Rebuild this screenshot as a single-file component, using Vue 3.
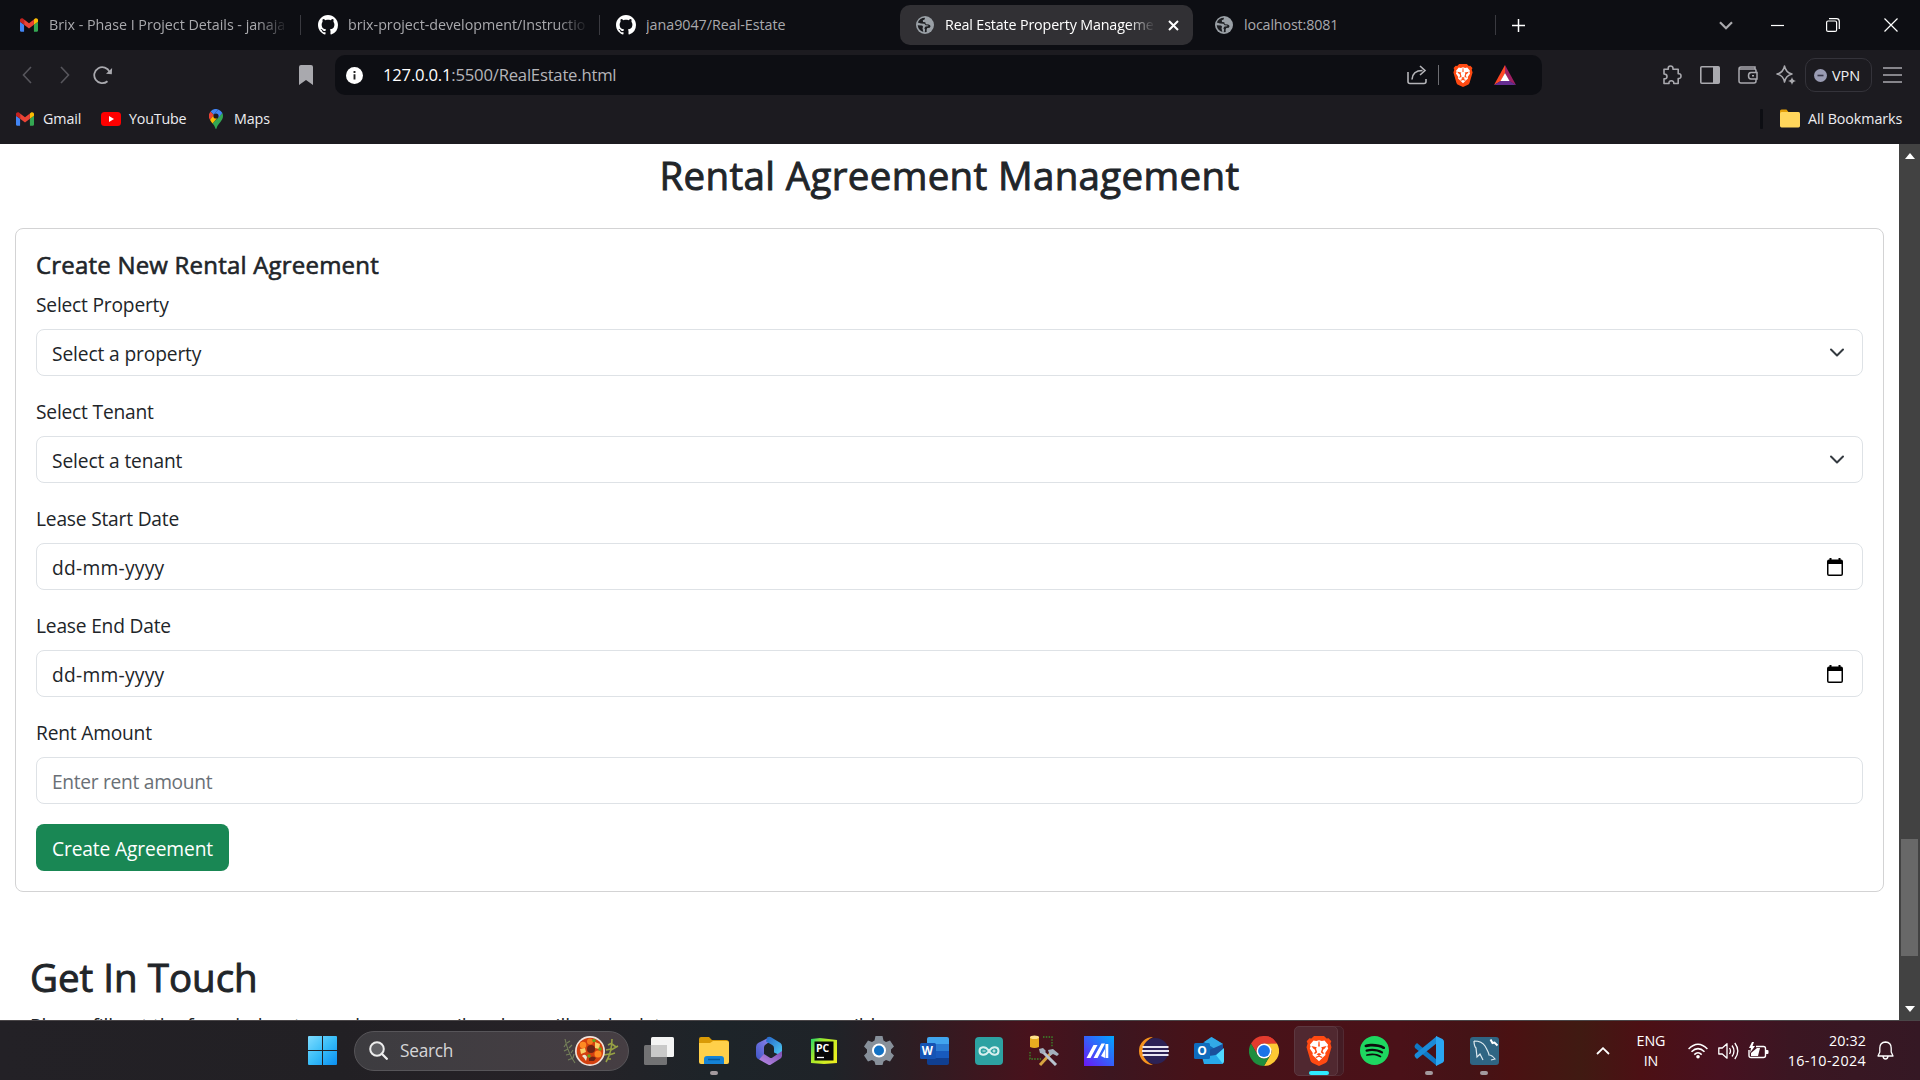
<script setup>
const tabs = [
  { icon: 'gmail', title: 'Brix - Phase I Project Details - janaja', kind: 't1', fade: true },
  { icon: 'github', title: 'brix-project-development/Instructio', kind: 't2', fade: true },
  { icon: 'github', title: 'jana9047/Real-Estate', kind: 't3' },
  { icon: 'globe', title: 'Real Estate Property Manageme', kind: 't4', fade: true, active: true },
  { icon: 'globe', title: 'localhost:8081', kind: 't5' }
]

const fields = [
  { label: 'Select Property', text: 'Select a property', type: 'select' },
  { label: 'Select Tenant', text: 'Select a tenant', type: 'select' },
  { label: 'Lease Start Date', text: 'dd-mm-yyyy', type: 'date' },
  { label: 'Lease End Date', text: 'dd-mm-yyyy', type: 'date' },
  { label: 'Rent Amount', text: 'Enter rent amount', type: 'text' }
]
</script>

<template>
  <div class="screen">
    <svg class="defs" width="0" height="0" aria-hidden="true">
      <symbol id="gmail" viewBox="52 42 88 66">
        <path fill="#4285f4" d="M58 108h14V74L52 59v43c0 3.32 2.69 6 6 6" />
        <path fill="#34a853" d="M120 108h14c3.32 0 6-2.69 6-6V59l-20 15" />
        <path fill="#fbbc04" d="M120 48v26l20-15v-8c0-7.42-8.47-11.65-14.4-7.2" />
        <path fill="#ea4335" d="M72 74V48l24 18 24-18v26L96 92" />
        <path fill="#c5221f" d="M52 51v8l20 15V48l-5.6-4.2c-5.94-4.45-14.4-.22-14.4 7.2" />
      </symbol>
      <symbol id="github" viewBox="0 0 16 16">
        <path fill="#fff" d="M8 0C3.58 0 0 3.58 0 8c0 3.54 2.29 6.53 5.47 7.59.4.07.55-.17.55-.38 0-.19-.01-.82-.01-1.49-2.01.37-2.53-.49-2.69-.94-.09-.23-.48-.94-.82-1.13-.28-.15-.68-.52-.01-.53.63-.01 1.08.58 1.23.82.72 1.21 1.87.87 2.33.66.07-.52.28-.87.51-1.07-1.78-.2-3.64-.89-3.64-3.95 0-.87.31-1.59.82-2.15-.08-.2-.36-1.02.08-2.12 0 0 .67-.21 2.2.82.64-.18 1.32-.27 2-.27s1.36.09 2 .27c1.53-1.04 2.2-.82 2.2-.82.44 1.1.16 1.92.08 2.12.51.56.82 1.27.82 2.15 0 3.07-1.87 3.75-3.65 3.95.29.25.54.73.54 1.48 0 1.07-.01 1.93-.01 2.2 0 .21.15.46.55.38A8.01 8.01 0 0 0 16 8c0-4.42-3.58-8-8-8z" />
      </symbol>
      <symbol id="globe" viewBox="0 0 18 18">
        <circle cx="9" cy="9" r="9" fill="#9aa0a6" />
        <path fill="#1d1e22" d="M1.800 6.500C3 3.300 5.500 1.800 9 1.700L8.600 3.600 6.800 4.200 7 6l2.300.3.5 1.900 2.900.2q1.900.4 1.800 2.200l-.8 1.200-2.400.2-.7 1.700.1 2.400-2 .2.400-2.800-.8-1.200 1.200-1.800 2.700-.3.100-.7-2.700-.3L8.400 7.800 5 7.500z" />
        <path fill="#1d1e22" d="M1.700 9.200l4.400.3 1 1.300-.6 1.500.9 3.700Q2.300 14.500 1.700 9.200z" />
      </symbol>
      <symbol id="brave" viewBox="0 0 26 30">
        <path fill="#ff4a12" d="M8 0h10l2.600 2.500 2-.2 2.700 3-.9 2.300 1.100 3.600-4 13.500c-.4 1.200-1.100 1.700-2 2.300L13 30l-6.500-3c-.9-.6-1.600-1.100-2-2.300L.5 11.200l1.100-3.600-.9-2.300 2.700-3 2 .2z" />
        <path fill="#fff" d="M13 4.200l2.800.9 2.700-.6 3.600 4.300-.7 1.700.8 2-3 4.600.3 1.900-1.400 1.300-5.100 4.900-5.100-4.900-1.400-1.300.3-1.900-3-4.600.8-2-.7-1.700 3.600-4.300 2.700.6z" />
        <path fill="#ff4a12" d="M5.400 10l5.400 1.200-.8 1.500 1.200 3.500-1.700 1.500-1.800-.2 1.700-2-.7-2.100-1.500-.9zM20.600 10l-5.400 1.200.8 1.500-1.200 3.500 1.700 1.500 1.800-.2-1.700-2 .7-2.100 1.500-.9zM12.500 5.500h1l.3 4.500-.8.900-.8-.9zM10.500 18.200L13 17l2.500 1.200-2.500 1.600zM9.300 21l3.700-1.600 3.700 1.600-1 .9-2.700-1.100-2.700 1.100z" />
      </symbol>
      <symbol id="folder" viewBox="0 0 20 19">
        <path fill="#e3a008" d="M0 2Q0 .5 1.500.5h5L8.500 3H18v6H0z" />
        <path fill="#ffd65c" d="M0 4.500Q0 3 1.500 3h17Q20 3 20 4.500v12.300Q20 18.500 18.500 18.500h-17Q0 18.500 0 16.800z" />
      </symbol>
    </svg>

    <header class="tabstrip">
      <template v-for="(tab, i) in tabs" :key="i">
        <div class="tab" :class="[tab.kind, { active: tab.active }]">
          <svg class="favicon" :class="tab.icon"><use :href="'#' + tab.icon" /></svg>
          <span class="tab-title" :class="{ fade: tab.fade }">{{ tab.title }}</span>
          <svg v-if="tab.active" class="tab-close" width="11" height="11" viewBox="0 0 11 11"><path d="M1 1l9 9M10 1l-9 9" stroke="#fff" stroke-width="2" /></svg>
        </div>
        <i v-if="i < 2 || i === 4" class="tab-sep"></i>
      </template>
      <svg class="new-tab" width="13" height="13" viewBox="0 0 13 13"><path d="M6.500 0v13M0 6.500h13" stroke="#fff" stroke-width="1.500" /></svg>
      <div class="window-controls">
        <svg width="14" height="9" viewBox="0 0 14 9"><path d="M1 1.200l6 6 6-6" fill="none" stroke="#a9a9ad" stroke-width="2.200" /></svg>
        <svg width="13" height="13" viewBox="0 0 13 13"><path d="M0 6.500h13" stroke="#fff" stroke-width="1.200" /></svg>
        <svg width="14" height="14" viewBox="0 0 14 14" fill="none" stroke="#fff" stroke-width="1.200"><rect x=".6" y="3" width="10" height="10.400" rx="1.500" /><path d="M3 .7h7.500q2.800 0 2.800 2.800V11" /></svg>
        <svg width="14" height="14" viewBox="0 0 14 14"><path d="M.5.5l13 13M13.500.5l-13 13" stroke="#fff" stroke-width="1.200" /></svg>
      </div>
    </header>

    <div class="toolbar">
      <div class="nav">
        <svg width="10" height="18" viewBox="0 0 10 18"><path d="M9 1L1.500 9 9 17" fill="none" stroke="#57565c" stroke-width="1.600" /></svg>
        <svg width="10" height="18" viewBox="0 0 10 18"><path d="M1 1l7.500 8L1 17" fill="none" stroke="#57565c" stroke-width="1.600" /></svg>
        <svg width="20" height="20" viewBox="0 0 20 20"><path d="M14.500 16.200A8 8 0 1 1 16.600 7" fill="none" stroke="#a9a9ae" stroke-width="1.800" /><path d="M13 8.700l5.800.6.300-6.300z" fill="#a9a9ae" /></svg>
      </div>
      <svg class="bookmark" width="14" height="20" viewBox="0 0 14 20"><path d="M2 0h10q2 0 2 2v18l-7-5-7 5V2q0-2 2-2z" fill="#a9a9ae" /></svg>
      <div class="urlbar">
        <svg width="17" height="17" viewBox="0 0 17 17"><circle cx="8.500" cy="8.500" r="8.500" fill="#fff" /><path d="M8.500 7.300v5.200M8.500 4v2" stroke="#222" stroke-width="1.900" /></svg>
        <span class="url"><b>127.0.0.1</b>:5500/RealEstate.html</span>
        <svg class="share" width="20" height="20" viewBox="0 0 20 20" fill="none" stroke="#b4b4b8" stroke-width="1.600"><path d="M1 7v9.500q0 2 2 2h14q2 0 2-2V14M5 14.500Q5.500 5.500 15.500 5.500M13 1l5 4.500-5 4.500" /></svg>
        <i class="url-sep"></i>
        <svg class="url-brave" width="20" height="23"><use href="#brave" /></svg>
        <svg width="22" height="20" viewBox="0 0 22 20"><path d="M11 0L0 20l7-4 4-8z" fill="#ff4724" /><path d="M11 0l11 20-7-4-4-8z" fill="#9e1f63" /><path d="M0 20h22l-6.500-4h-9z" fill="#662d91" /><path d="M11 8l-4.500 8h9z" fill="#fff" /></svg>
      </div>
      <div class="actions">
        <svg width="20" height="20" viewBox="0 0 20 20" fill="none" stroke="#a9a9ae" stroke-width="1.600"><path d="M2 4.200h4.300Q5.800 1 8.500 1T11 4.200h5.200v4.600Q19 8.300 19 11t-2.800 2.500V18.500h-4.400Q12 15.800 9.300 15.800T7 18.500H2v-4.700Q5 14 5 11.500T2 9z" stroke-linejoin="round" /></svg>
        <svg width="20" height="18" viewBox="0 0 20 18"><rect x=".8" y=".8" width="18.400" height="16.400" rx="1" fill="none" stroke="#a9a9ae" stroke-width="1.600" /><path d="M13 1h6v16h-6z" fill="#a9a9ae" /></svg>
        <svg width="20" height="18" viewBox="0 0 20 18" fill="none" stroke="#a9a9ae" stroke-width="1.500"><path d="M18 6V4.500q0-1.500-1.500-1.500H1M17 3V1H3Q1 1 1 3v12q0 2 2 2h13q2 0 2-2v-1.500M19 6.500h-6q-2.500 0-2.500 3.300t2.500 3.300h6zM14 9.800h2" /></svg>
        <svg width="20" height="20" viewBox="0 0 20 20"><path d="M8.500 1q1.200 6.500 7.500 8-6.300 1.500-7.500 8Q7.300 10.500 1 9q6.300-1.500 7.500-8z" fill="none" stroke="#a9a9ae" stroke-width="1.500" stroke-linejoin="round" /><path d="M16 12q.6 3.400 4 4-3.400.6-4 4-.6-3.400-4-4 3.400-.6 4-4z" fill="#a9a9ae" /></svg>
      </div>
      <div class="vpn"><svg width="13" height="13" viewBox="0 0 13 13"><circle cx="6.500" cy="6.500" r="6.500" fill="#9a9cb3" /><path d="M3.500 6.500h6" stroke="#38384a" stroke-width="1.600" /></svg><span>VPN</span></div>
      <svg class="menu" width="19" height="16" viewBox="0 0 19 16"><path d="M0 1h19M0 8h19M0 15h19" stroke="#a9a9ae" stroke-width="1.600" /></svg>
    </div>

    <div class="bookmarks">
      <svg width="18" height="14"><use href="#gmail" /></svg><span class="bm gm">Gmail</span>
      <svg width="20" height="14" viewBox="0 0 20 14"><rect width="20" height="14" rx="3.500" fill="#f00" /><path d="M8 4l5 3-5 3z" fill="#fff" /></svg><span class="bm yt">YouTube</span>
      <svg width="14" height="20" viewBox="0 0 14 20">
        <path fill="#34a853" d="M7 20c.5 0 .6-.8 1-2 1.300-3.700 6-6.200 6-11 0-1-.2-2-.6-2.900L3.500 14.600C4.600 15.900 5.500 17 6 18.300c.3 1 .5 1.700 1 1.700z" />
        <path fill="#fbbc04" d="M1 10.800c.6 1.400 1.600 2.600 2.500 3.800l6-7.200-4.800-2z" />
        <path fill="#ea4335" d="M1.600 2.500A7 7 0 0 0 1 10.800L5 6z" />
        <path fill="#4285f4" d="M1.600 2.500A7 7 0 0 1 9.200.4L4.700 5.600z" />
        <path fill="#4285f4" d="M9.200.4a7 7 0 0 1 4.200 3.700L9.200 9 4.700 5.600z" />
        <circle cx="7" cy="7" r="2.600" fill="#1c1b20" />
      </svg><span class="bm mp">Maps</span>
      <i class="bm-sep"></i>
      <svg class="bm-folder" width="20" height="19"><use href="#folder" /></svg><span class="bm all">All Bookmarks</span>
    </div>

    <div class="viewport">
      <main class="page">
        <h1>Rental Agreement Management</h1>
        <section class="card">
          <h2>Create New Rental Agreement</h2>
          <div v-for="f in fields" :key="f.label" class="field">
            <div class="label">{{ f.label }}</div>
            <div class="control" :class="f.type">
              <span>{{ f.text }}</span>
              <svg v-if="f.type === 'select'" class="caret" width="20" height="20" viewBox="0 0 16 16"><path d="m2 5 6 6 6-6" fill="none" stroke="#343a40" stroke-width="2" stroke-linecap="round" stroke-linejoin="round" transform="translate(1.600 1.200) scale(.8)" /></svg>
              <svg v-if="f.type === 'date'" class="cal" width="16" height="18" viewBox="0 0 16 18"><path fill="#000" fill-rule="evenodd" d="M2.500 0h2v1.500h7V0h2v1.500h.5q2 0 2 2V16q0 2-2 2H2q-2 0-2-2V3.500q0-2 2-2h.5zM1.500 6v10q0 .6.600.6h11.800q.6 0 .6-.6V6z" /></svg>
            </div>
          </div>
          <button class="create">Create Agreement</button>
        </section>
        <h1 class="touch">Get In Touch</h1>
        <p class="note">Please fill out the form below to send us an email and we will get back to you as soon as possible.</p>
      </main>
      <div class="scrollbar">
        <svg width="10" height="6" viewBox="0 0 10 6"><path d="M5 0l5 6H0z" fill="#fff" /></svg>
        <div class="thumb"></div>
        <svg width="10" height="6" viewBox="0 0 10 6"><path d="M5 6l5-6H0z" fill="#fff" /></svg>
      </div>
    </div>

    <footer class="taskbar">
      <svg class="start" width="29" height="29" viewBox="0 0 29 29">
        <defs><linearGradient id="win" x1="0" y1="0" x2="1" y2="1" gradientUnits="objectBoundingBox"><stop offset="0" stop-color="#7fdcff" /><stop offset=".5" stop-color="#38bdf8" /><stop offset="1" stop-color="#0a8ef0" /></linearGradient></defs>
        <path fill="url(#win)" d="M1 0h13v13.900H0V1q0-1 1-1zM15 0h13q1 0 1 1v12.900H15zM0 15h14v14H1q-1 0-1-1zM15 15h14v13q0 1-1 1H15z" />
      </svg>
      <div class="search">
        <svg width="19" height="19" viewBox="0 0 19 19"><circle cx="8" cy="8" r="6.800" fill="#606064" stroke="#ededed" stroke-width="2" /><path d="M12.800 12.800l5 5" stroke="#ededed" stroke-width="2.300" stroke-linecap="round" /></svg>
        <span>Search</span>
        <svg class="soup" width="58" height="32" viewBox="0 0 58 32">
          <g fill="none" stroke="#76825a" stroke-width="1.100"><path d="M3 4q3 14 10 24M4 9L2 12M5 8l3-2M6 14l-4 2M7 13l3-3M8 19l-4 1M9 18l2-3M11 23l-5 2M11 23l1-4" /><path stroke="#96a044" stroke-width="1.600" d="M50 4q0 13-6 23M50 8l-4 2M50 9l4 3M49 14l-5 1M49 15l7-4M47 19l-5 1M47 20l6-2M45 24l4 0" /></g>
          <circle cx="28" cy="16" r="15" fill="#f1e4dc" /><circle cx="28" cy="16" r="13.300" fill="#d3400f" />
          <circle cx="21" cy="10" r="3.300" fill="#ff8a22" /><circle cx="36" cy="19" r="3.500" fill="#ff8a22" /><circle cx="28" cy="6.500" r="3" fill="#f47a1c" />
          <path d="M33 7l5 2-1 5-4-1zM18 14l5-1 1 4-5 2z" fill="#f8cf68" /><circle cx="29" cy="14" r="4" fill="#6c2415" /><path d="M27 23q4-3 7 0l-2 3h-5z" fill="#6c2415" /><path d="M20 21q3-3 5 1l-1 4-2-3z" fill="#eee2cf" />
          <circle cx="32" cy="5.500" r="1.700" fill="#66a51c" /><circle cx="38" cy="14" r="1.700" fill="#66a51c" /><circle cx="27" cy="21" r="1.700" fill="#66a51c" />
        </svg>
      </div>
      <div class="apps">
        <div class="app"><svg width="30" height="28" viewBox="0 0 30 28"><rect x="7" y="0" width="23" height="20" rx="1.500" fill="#f4f4f4" /><rect x="0" y="8" width="23" height="20" rx="1.500" fill="#8e8e8e" fill-opacity=".75" /><rect x="7" y="8" width="16" height="12" fill="#c9c9c9" /></svg></div>
        <div class="app"><svg width="30" height="27" viewBox="0 0 30 27"><path fill="#d99a06" d="M0 2Q0 0 2 0h8l3 3h14q3 0 3 3v4H0z" /><path fill="#ffd04a" d="M0 6h11l3-2h14q2 0 2 2v19q0 2-2 2H2q-2 0-2-2z" /><path fill="#1583d6" d="M5 27v-5q0-3 3-3h14q3 0 3 3v5z" /><path stroke="#075a9d" stroke-width="1.500" d="M9 22.500h12" /></svg><i class="dot"></i></div>
        <div class="app"><svg width="28" height="30" viewBox="0 0 28 30"><defs><linearGradient id="ma" x1="0" y1="1" x2="1" y2="0"><stop offset="0" stop-color="#3f55c7" /><stop offset="1" stop-color="#9a8bf0" /></linearGradient><linearGradient id="mb" x1="0" y1="0" x2="1" y2="1"><stop offset="0" stop-color="#2563c8" /><stop offset="1" stop-color="#4fd0f5" /></linearGradient><linearGradient id="mc" x1="0" y1="1" x2="1" y2="0"><stop offset="0" stop-color="#b98be8" /><stop offset="1" stop-color="#7d4fb0" /></linearGradient></defs><path fill="url(#ma)" d="M15 1L3 7Q1 8.500 1 11v8q0 3 3 4.500l5-3.500V11.500q0-2 1.700-3L17 4z" /><path fill="url(#mb)" d="M12 1.500q2-1.300 4-.2L25.500 7Q27 8 27 10.500V20l-8-3.500V12q0-2-1.800-3L11 5.500z" /><path fill="url(#mc)" d="M4 23.500l9 5q1.500 1 3 0l9.500-6Q27 21.500 27 19.500V15l-9.500 6.500q-1.500 1-3 0L9 18z" /></svg></div>
        <div class="app"><svg width="26" height="26" viewBox="0 0 26 26"><defs><linearGradient id="pc" x1="0" y1="0" x2="1" y2=".6"><stop offset="0" stop-color="#20d66b" /><stop offset=".4" stop-color="#a6e92a" /><stop offset="1" stop-color="#e8ee20" /></linearGradient></defs><path fill="url(#pc)" d="M0 1l9-1 17 2v23l-13 1-13-1z" /><rect x="3.500" y="3.500" width="19" height="19" fill="#060606" /><text x="5" y="14" font-size="10.500" font-weight="700" fill="#fff" font-family="Open Sans, sans-serif">PC</text><path d="M6 19.500h7" stroke="#fff" stroke-width="1.300" /></svg></div>
        <div class="app"><svg width="30" height="29" viewBox="0 0 30 29"><path fill="#87909a" d="M11.500 0h7l1 4.500 2.500 1.400L26 4.500l4 6-3 3v3l3 3-4 6-4-1.500-2.500 1.500-1 3.500h-7l-1-3.500L8 24l-4 1.500-4-6 3-3v-3l-3-3 4-6 4 1.400 2.500-1.400z" /><circle cx="15" cy="14.500" r="7" fill="#fff" /><circle cx="15" cy="14.500" r="5" fill="#1271c4" /></svg></div>
        <div class="app"><svg width="29" height="28" viewBox="0 0 29 28"><path fill="#41a5ee" d="M9 0h18q2 0 2 2v5H7V2q0-2 2-2z" /><path fill="#2b7cd3" d="M7 7h22v7H7z" /><path fill="#185abd" d="M7 14h22v7H7z" /><path fill="#103f91" d="M7 21h22v5q0 2-2 2H9q-2 0-2-2z" /><rect y="6" width="16" height="16" rx="1.500" fill="#1554b4" /><text x="1.800" y="18" font-size="11.500" font-weight="700" fill="#fff" font-family="Open Sans, sans-serif">W</text></svg></div>
        <div class="app"><svg width="28" height="28" viewBox="0 0 28 28"><rect width="28" height="28" rx="4" fill="#2da2a2" /><path fill="none" stroke="#d9f0ef" stroke-width="2" d="M14 14C10.500 8.500 4.500 9.500 4.500 14S10.500 19.500 14 14s9.500-4.500 9.500 0S17.500 19.500 14 14z" /><path stroke="#d9f0ef" stroke-width="1.200" d="M7.500 14h3M17.500 14h3M19 12.500v3" /></svg></div>
        <div class="app"><svg width="30" height="31" viewBox="0 0 30 31"><path d="M14 2h9v10M1 17v7h11" fill="none" stroke="#3b8b2a" stroke-width="1.300" stroke-dasharray="1.500 1.300" /><path fill="#e7ad20" d="M1 2h9v10q-4.500 2-9 0z" /><ellipse cx="5.500" cy="2.200" rx="4.500" ry="1.800" fill="#ffe28a" /><path d="M11 30L22 18" stroke="#d9a441" stroke-width="3" /><path d="M13 16l14 14" stroke="#b8c4cf" stroke-width="3" /><path d="M10 14l4-1 3 3-3 3-3-1zM19 15l5-1 6 5-2 2-4-2-3 2z" fill="#a3b0bd" /></svg></div>
        <div class="app"><svg width="30" height="30" viewBox="0 0 30 30"><defs><linearGradient id="as" x1="0" y1="1" x2="1" y2="0"><stop offset="0" stop-color="#6a17f5" /><stop offset="1" stop-color="#00a8ff" /></linearGradient></defs><path fill="url(#as)" d="M0 0h30v30H0z" /><path fill="#fff" d="M2.500 22L9.500 9h4l-7 13zM9.500 22l8-14.500h3.500L13.500 22zM21.500 8h2.800v14h-2.800zM17 20l4-7v9z" /></svg></div>
        <div class="app"><svg width="30" height="28" viewBox="0 0 30 28"><path fill="#f7941e" d="M14 0A14 14 0 0 0 14 28 15 15 0 0 1 14 0z" /><circle cx="16.500" cy="14" r="13" fill="#2c2255" /><path d="M3.500 10h26M3 14h27M3.500 18h26" stroke="#e9e7f2" stroke-width="2.200" /></svg></div>
        <div class="app"><svg width="30" height="27" viewBox="0 0 30 27"><path fill="#1066b5" d="M6 8L17.500 0 29 7v13H6z" /><path fill="#32a9e7" d="M17.500 0L29 7l-8 5-11-7z" /><path fill="#1a4f9c" d="M11 15l18-8v6L14 22z" /><path fill="#50d9ff" d="M12 27l18-16v13q0 3-3 3z" /><path fill="#28a8ea" d="M8 20l14-2 7 9H10z" /><rect y="6" width="16" height="16" rx="1.500" fill="#0f6cbd" /><text x="3.200" y="18.200" font-size="12" font-weight="700" fill="#fff" font-family="Open Sans, sans-serif">O</text></svg></div>
        <div class="app"><svg width="30" height="30" viewBox="0 0 48 48"><path fill="#e33b2e" d="M3.200 12A24 24 0 0 1 44.800 12H24A12 12 0 0 0 13.600 30z" /><path fill="#fcc934" d="M44.800 12A24 24 0 0 1 24 48L34.400 30A12 12 0 0 0 34.400 18V12z" /><path fill="#fcc934" d="M24 12h20.800L38 24z" /><path fill="#1e8e3e" d="M24 48A24 24 0 0 1 3.200 12L13.600 30A12 12 0 0 0 34.400 30z" /><path fill="#e33b2e" d="M24 12h20.800A24 24 0 0 0 24 0z" /><circle cx="24" cy="24" r="12" fill="#fff" /><circle cx="24" cy="24" r="9.500" fill="#1a73e8" /></svg></div>
        <div class="app"><div class="tile back"></div><div class="tile"></div><svg class="over" width="26" height="30"><use href="#brave" /></svg><i class="dot on"></i></div>
        <div class="app"><svg width="29" height="29" viewBox="0 0 24 24"><circle cx="12" cy="12" r="11" fill="#0d0d0d" /><path fill="#1ed760" d="M12 0C5.400 0 0 5.400 0 12s5.400 12 12 12 12-5.400 12-12S18.660 0 12 0zm5.521 17.340c-.24.359-.66.48-1.021.24-2.820-1.740-6.360-2.101-10.561-1.141-.418.122-.779-.179-.899-.539-.12-.421.18-.78.54-.9 4.560-1.021 8.520-.6 11.640 1.320.42.180.479.659.301 1.020zm1.440-3.300c-.301.42-.841.6-1.262.3-3.239-1.980-8.159-2.580-11.939-1.380-.479.12-1.020-.12-1.140-.6-.12-.48.12-1.021.6-1.141C9.600 9.900 15 10.561 18.720 12.840c.361.181.54.78.241 1.200zm.12-3.360C15.240 8.400 8.820 8.160 5.160 9.301c-.6.179-1.200-.181-1.380-.721-.18-.601.18-1.200.72-1.381 4.260-1.260 11.280-1.020 15.721 1.621.539.300.719 1.020.419 1.560-.299.421-1.020.599-1.559.300z" /></svg></div>
        <div class="app"><svg width="30" height="30" viewBox="0 0 30 30"><path fill="#0f78c4" d="M1 9l2-2 20 17v6L1 12q-1-1.500 0-3z" /><path fill="#1b8bd8" d="M1 21l2 2L23 7V0L1 18q-1 1.500 0 3z" /><path fill="#2aa6f2" d="M22 0l6.500 3Q30 4 30 5.500v19q0 1.500-1.500 2.300L22 30z" /></svg><i class="dot"></i></div>
        <div class="app"><svg width="29" height="28" viewBox="0 0 29 28"><rect width="29" height="28" rx="3" fill="#2f6583" /><path d="M4 4q8 0 11 5 4 7 4 9 3 0 6 4l-4 1M4 4q0 5 2 7l1 9 3-3 3 6" fill="none" stroke="#dce8ee" stroke-width="1.200" /><path d="M20.500 2.500l2 3.500 2-.5 3 3" stroke="#fff" stroke-width="2" fill="none" /></svg><i class="dot"></i></div>
      </div>
      <div class="tray">
        <svg class="up" width="14" height="8" viewBox="0 0 14 8"><path d="M1 7l6-5.800L13 7" fill="none" stroke="#fff" stroke-width="1.800" /></svg>
        <div class="lang"><div>ENG</div><div>IN</div></div>
        <svg class="wifi" width="20" height="16" viewBox="0 0 20 16" fill="none" stroke="#fff" stroke-width="1.500"><path d="M.6 6Q10-3.500 19.400 6M3.500 8.800Q10 2.400 16.500 8.800M6.300 11.600Q10 8 13.700 11.600" /><circle cx="10" cy="13.800" r="1.800" fill="#fff" stroke="none" /></svg>
        <svg class="vol" width="21" height="18" viewBox="0 0 21 18" fill="none" stroke="#fff" stroke-width="1.300"><path d="M.8 6h3.500L9 1.800v14.400L4.300 12H.8z" stroke-linejoin="round" /><path d="M11.500 6q2 3 0 6M14 3.500q4 5.500 0 11M16.800 1q6 8 0 16" /></svg>
        <svg class="bat" width="21" height="18" viewBox="0 0 21 18"><path d="M8 4.500h7.500q2 0 2 2v7q0 2-2 2H3q-2 0-2-2V8" fill="none" stroke="#fff" stroke-width="1.400" /><path d="M18 8h1.500q1 0 1 1v2q0 1-1 1H18z" fill="#fff" /><path d="M3 14V11l6-5h3l-2 8z" fill="#fff" /><path d="M4 0L1 6h2L2 11l5-7H4.500L6 0z" fill="#fff" /></svg>
        <div class="clock"><div>20:32</div><div class="date-line">16-10-2024</div></div>
        <svg class="bell" width="17" height="19" viewBox="0 0 17 19"><path d="M8.500 1Q2.800 1.500 2.800 7v4L1 15h15l-1.800-4V7Q14.200 1.500 8.500 1zM6 15.500q.5 2.500 2.500 2.500t2.500-2.500" fill="none" stroke="#fff" stroke-width="1.300" stroke-linejoin="round" /></svg>
      </div>
    </footer>
  </div>
</template>

<style>
html, body { margin: 0; overflow: hidden; }
</style>

<style scoped>
* { box-sizing: border-box; }
.screen { width: 1920px; height: 1080px; display: flex; flex-direction: column; font-family: "Open Sans", "Noto Sans", sans-serif; overflow: hidden; background: #fff; }
.defs { position: absolute; }
svg { display: block; flex: none; }
i { display: block; flex: none; }

.tabstrip { height: 50px; flex: none; background: #0d0e13; display: flex; align-items: center; }
.tab { height: 40px; display: flex; align-items: center; flex: none; color: #a9a9ad; font-size: 14.300px; white-space: nowrap; }
.t1 { width: 300px; padding-left: 20px; }
.t2 { width: 298px; padding-left: 17px; }
.t3 { width: 300px; padding-left: 16px; }
.t4 { width: 293px; padding-left: 16px; }
.t5 { width: 302px; padding-left: 22px; }
.tab.active { background: #313034; color: #fff; border-radius: 10px; }
.favicon { width: 18px; height: 18px; margin-right: 11px; }
.favicon.github { width: 20px; height: 20px; margin-right: 10px; }
.favicon.gmail { height: 14px; }
.tab-title { overflow: hidden; height: 24px; line-height: 24px; letter-spacing: -0.030px; }
.t1 .tab-title { width: 237px; }
.t2 .tab-title { width: 238px; }
.t4 .tab-title { width: 208px; letter-spacing: -.15px; }
.t5 .tab-title { letter-spacing: -.15px; }
.fade { mask-image: linear-gradient(90deg, #000 88%, transparent 101%); }
.tab-close { margin-left: 15px; }
.tab-sep { width: 1px; height: 20px; background: #3a3a40; }
.new-tab { margin-left: 16px; }
.window-controls { margin-left: auto; padding-right: 22px; display: flex; align-items: center; }
.window-controls svg + svg { margin-left: 38px; }
.window-controls svg:nth-child(3) { margin-left: 42px; }
.window-controls svg:nth-child(4) { margin-left: 44px; }

.toolbar { height: 50px; flex: none; background: #1c1b20; display: flex; align-items: center; }
.nav { display: flex; align-items: center; padding-left: 22px; }
.nav svg:nth-child(2) { margin-left: 28px; }
.nav svg:nth-child(3) { margin-left: 23px; }
.bookmark { margin-left: 186px; }
.urlbar { width: 1207px; height: 40px; margin-left: 22px; background: #0d0e13; border-radius: 10px; display: flex; align-items: center; padding: 0 26px 0 11px; }
.url { margin-left: 20px; padding-bottom: 2px; color: #b5b5b9; font-size: 16.700px; letter-spacing: -0.230px; white-space: nowrap; }
.url b { font-weight: 400; color: #fff; }
.share { margin-left: auto; }
.url-sep { width: 1px; height: 20px; background: #6d6d72; margin-left: 11px; }
.url-brave { margin: 0 21px 0 14px; }
.actions { display: flex; align-items: center; gap: 18px; margin-left: 120px; }
.vpn { width: 67px; height: 34px; margin-left: 9px; border: 1.500px solid #34333a; border-radius: 10px; display: flex; align-items: center; padding-left: 8px; color: #f0f0f3; font-size: 14.500px; }
.vpn span { margin-left: 5px; letter-spacing: -.1px; }
.menu { margin-left: 11px; }

.bookmarks { height: 44px; flex: none; background: #1c1b20; display: flex; align-items: center; padding: 0 17px 7px 16px; color: #ededf0; font-size: 14.300px; }
.bm { margin-left: 9px; padding-bottom: 1px; letter-spacing: -.1px; white-space: nowrap; }
.gm { width: 58px; }
.yt { width: 80px; margin-left: 8px; letter-spacing: -.2px; }
.mp { margin-left: 11px; }
.bm-sep { width: 3px; height: 20px; background: #0d0e13; margin-left: auto; border-radius: 1px; }
.bm-folder { margin-left: 17px; }
.bm.all { width: 95px; margin-left: 8px; letter-spacing: -.08px; }

.viewport { height: 876px; flex: none; display: flex; background: #fff; overflow: hidden; }
.page { width: 1899px; padding: 0 15px; color: #212529; }
h1 { margin: 0; text-align: center; font-weight: 400; -webkit-text-stroke: .9px #212529; font-size: 38.500px; line-height: 48px; height: 84px; padding-top: 7px; letter-spacing: .34px; }
.card { height: 664px; border: 1px solid #d3d3d4; border-radius: 8px; padding: 20px; }
h2 { margin: 0; font-weight: 400; -webkit-text-stroke: .6px #212529; font-size: 24px; line-height: 30px; height: 40px; padding-top: 1px; letter-spacing: .2px; }
.label { height: 30px; line-height: 30px; padding-top: 1px; font-size: 19.200px; margin-bottom: 10px; letter-spacing: -.2px; }
.field { margin-bottom: 20px; }
.control { height: 47px; border: 1px solid #dee2e6; border-radius: 8px; padding: 1px 15px 0; display: flex; align-items: center; justify-content: space-between; font-size: 19.200px; letter-spacing: -.13px; }
.control.text { color: #6a7076; letter-spacing: -.3px; }
.control.date { letter-spacing: .26px; }
.cal { margin-right: 4px; }
.create { display: block; height: 47px; width: 193px; border: 0; border-radius: 8px; background: #198754; color: #fff; font: 400 19.200px/46px "Open Sans", sans-serif; letter-spacing: -.13px; padding: 2px 0 0; }
h1.touch { text-align: left; margin: 54px 0 0 15px; height: 65px; letter-spacing: 0; }
.note { margin: 0 0 0 15px; font-size: 19.200px; line-height: 30px; white-space: nowrap; letter-spacing: -.06px; }
.scrollbar { width: 21px; background: #424242; display: flex; flex-direction: column; align-items: center; padding: 9px 0 8px; }
.thumb { width: 17px; height: 117px; background: #686868; margin: 680px 0 auto; }

.taskbar { height: 60px; flex: none; display: flex; align-items: center; border-top: 1px solid #4a4648; background: linear-gradient(90deg, #232126 0, #222024 340px, #262227 560px, #1d2429 720px, #1f2328 830px, #2d1d23 910px, #48121c 1030px, #3c1620 1110px, #471218 1200px, #4a1118 1400px, #441316 1470px, #4a1112 1510px, #401a12 1580px, #4c1014 1640px, #471120 1720px, #3b1622 1790px, #351824 1920px); }
.start { margin-left: 308px; }
.search { width: 275px; height: 40px; margin-left: 17px; border-radius: 20px; border: 1px solid #575559; background: linear-gradient(90deg, #3d3c40, #463e43); display: flex; align-items: center; padding: 0 8px 0 14px; }
.search span { margin-left: 12px; color: #d6d6d8; font-size: 17.300px; letter-spacing: -.25px; }
.soup { margin-left: auto; }
.apps { display: flex; margin-left: 2.500px; }
.app { width: 55px; height: 58px; display: flex; align-items: center; justify-content: center; position: relative; }
.dot { position: absolute; left: 23.500px; top: 49px; width: 8px; height: 4px; border-radius: 2px; background: #a39a9e; }
.dot.on { left: 17.500px; width: 20px; background: #2eeaff; }
.tile { position: absolute; left: 2.500px; top: 4px; width: 44px; height: 50px; border-radius: 5px; background: #502830; border: 1px solid #5d3840; }
.tile.back { left: 10px; width: 42px; background: #441c24; border-color: #522a32; }
.over { position: relative; left: 0; }
.tray { display: flex; align-items: center; color: #fff; font-size: 14.300px; line-height: 20px; margin-left: auto; padding-right: 26px; }
.lang { width: 40px; text-align: center; margin-left: 21px; letter-spacing: -.1px; }
.wifi { margin-left: 17px; }
.vol { margin-left: 10px; }
.bat { margin-left: 9px; }
.clock { width: 89px; text-align: right; margin-left: 8px; letter-spacing: .1px; }
.date-line { letter-spacing: .36px; }
.bell { margin-left: 11px; }
</style>
